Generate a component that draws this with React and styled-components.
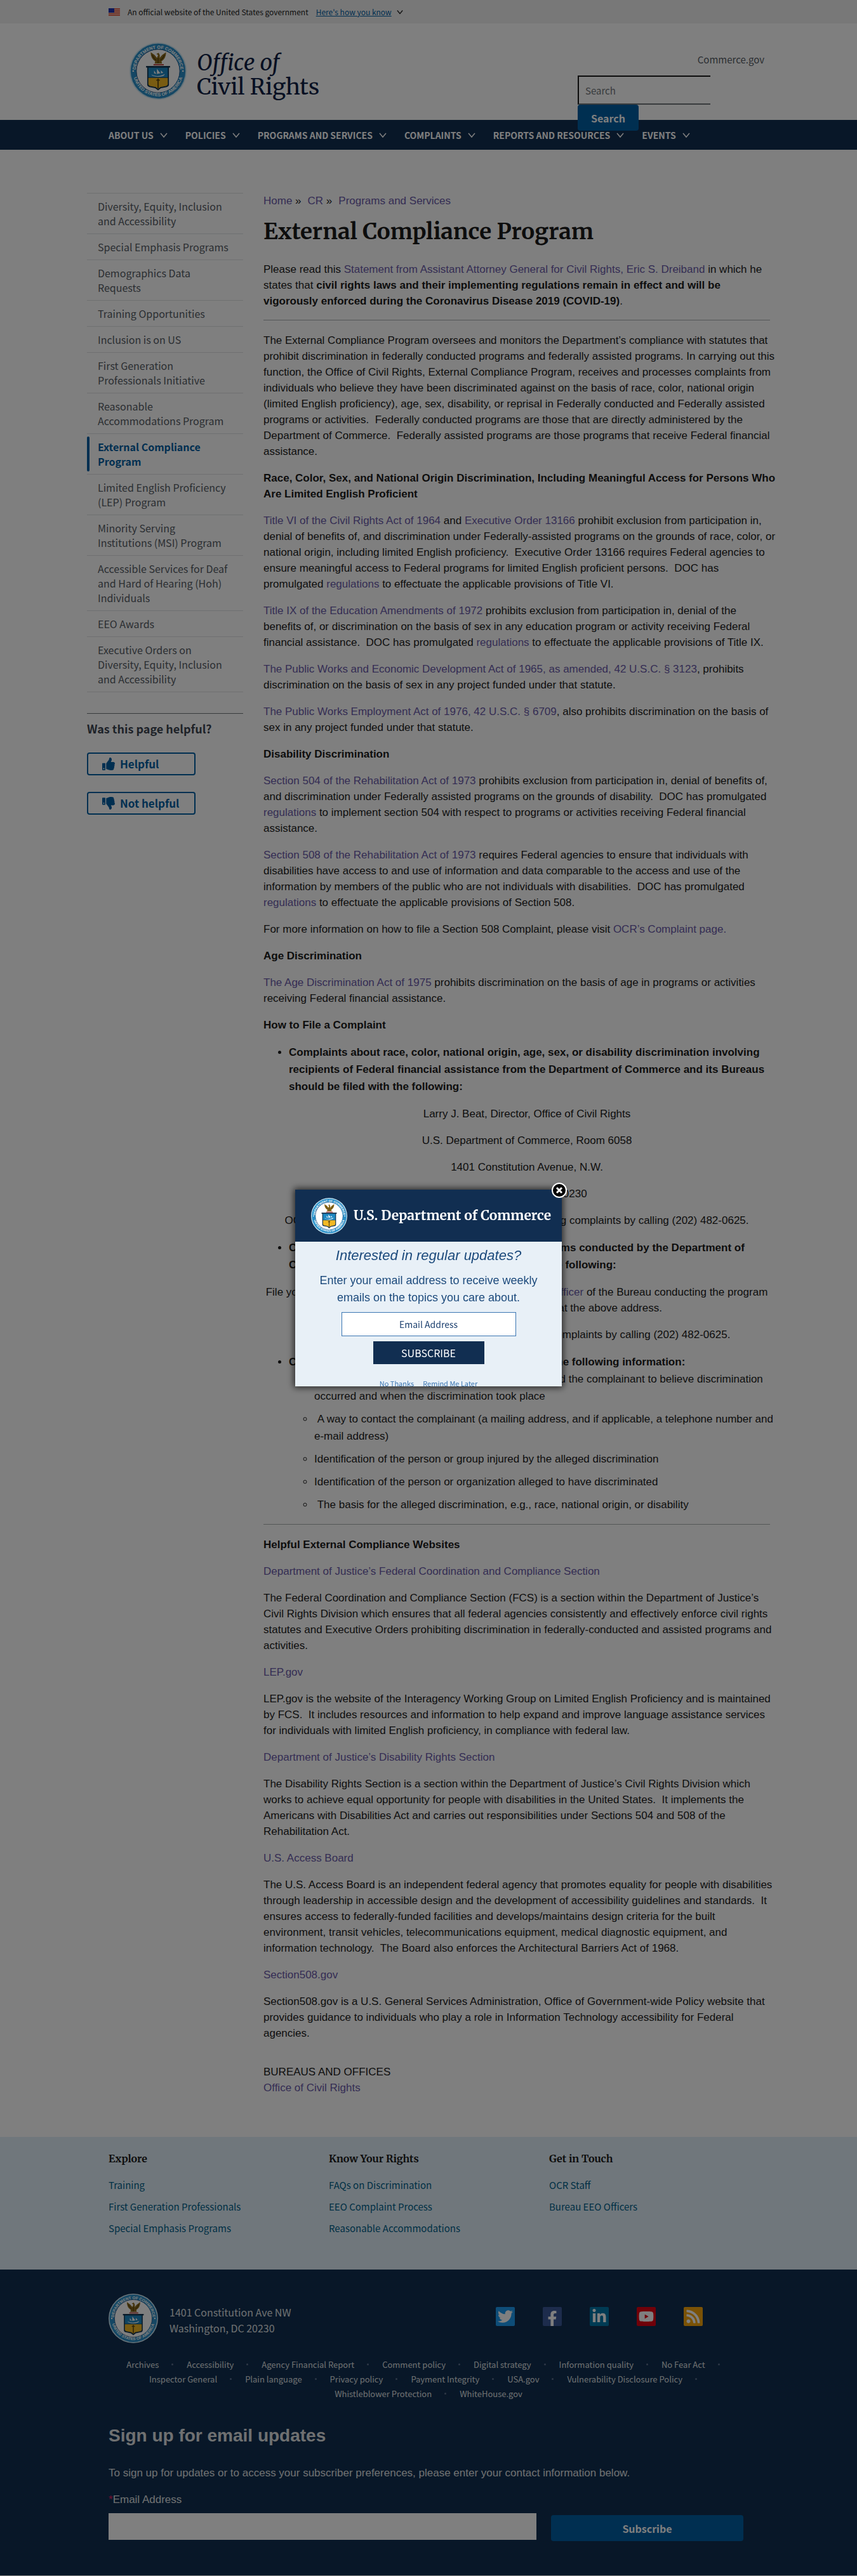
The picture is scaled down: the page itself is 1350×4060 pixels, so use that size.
import React, { useId } from 'react';
import styled, { createGlobalStyle, css } from 'styled-components';
import { FaThumbsUp, FaThumbsDown, FaTwitter, FaFacebookF, FaLinkedinIn, FaYoutube, FaRss } from 'react-icons/fa';

const sans = '"Liberation Sans", Arial, Helvetica, sans-serif';
const ui = '"Source Sans Pro", "Noto Sans CJK SC", sans-serif';
const serif = '"Merriweather", "DejaVu Serif Condensed", "DejaVu Serif", serif';

const navy = '#112e51';
const blue = '#005ea2';
const visited = '#6a5aa8';

const GlobalStyle = createGlobalStyle`
  *, *::before, *::after { box-sizing: border-box; }
  body { margin: 0; background: #fff; color: #1b1b1b; font: 17px/25px ${sans}; }
  a { color: ${visited}; text-decoration: none; }
  button, input { font: inherit; }
  ul { list-style: none; margin: 0; padding: 0; }
`;

const Wrap = styled.div`
  max-width: 1008px;
  margin: 0 auto;
`;

/* ---------- seal ---------- */

const SealSvg = styled.svg`
  display: block;
  flex: none;
  width: ${(p) => p.$size}px;
  height: ${(p) => p.$size}px;
`;

function Seal({ size }) {
  const id = useId();
  return (
    <SealSvg $size={size} viewBox="0 0 100 100" role="img" aria-label="Department of Commerce seal">
      <defs>
        <path id={`${id}t`} d="M 11 50 A 39 39 0 0 1 89 50" />
        <path id={`${id}b`} d="M 6 50 A 44 44 0 0 0 94 50" />
      </defs>
      <circle cx="50" cy="50" r="50" fill="#cfe9f5" />
      <circle cx="50" cy="50" r="48" fill="#2a8fc8" />
      <circle cx="50" cy="50" r="38" fill="#fff" stroke="#12467a" strokeWidth="1" />
      <g fill="#fff" fontFamily="Liberation Sans, sans-serif" fontSize="8" fontWeight="700" textAnchor="middle">
        <text><textPath href={`#${id}t`} startOffset="50%">DEPARTMENT OF COMMERCE</textPath></text>
        <text><textPath href={`#${id}b`} startOffset="50%">UNITED STATES OF AMERICA</textPath></text>
      </g>
      <circle cx="6.500" cy="50" r="1.500" fill="#fff" />
      <circle cx="93.500" cy="50" r="1.500" fill="#fff" />
      <path d="M37 17 L44 22 L48 27 L50 22 L47 20 L51 18 L53 22 L53 27 L57 22 L64 17 Q64 28 56 33 L57 37 L44 37 L45 33 Q37 28 37 17 Z" fill="#8a6a1c" />
      <path d="M40 22 Q43 29 47 31 M61 22 Q58 29 54 31 M50 27 V36" stroke="#4a3608" strokeWidth="1.200" fill="none" />
      <path d="M42 39 H60" stroke="#b3352c" strokeWidth="2" />
      <path d="M29 41 H71 V44 H69 V74 Q69 77 65 78 L55 80 L50 84 L45 80 L35 78 Q31 77 31 74 V44 H29 Z" fill="#12324f" />
      <path d="M33 44 H67 V61 H33 Z" fill="#1f88c2" />
      <path d="M33 62 H67 V73 Q67 75 64 76 L54 78 L50 81 L46 78 L36 76 Q33 75 33 73 Z" fill="#f2b824" />
      <path d="M38 56 Q50 62 62 55 L60 58 Q50 62 40 58 Z M43 54 V49 L47 55 Z M48 55 V46 L54 54 Z M55 54 V49 L59 53 Z" fill="#fff" />
      <path d="M50 63 V80 M47 66 H53 M49 69 H51" stroke="#5b4510" strokeWidth="2" />
    </SealSvg>
  );
}

/* ---------- banner ---------- */

const Banner = styled.div`
  background: #f0f0f0;
  font: 12px/37px ${ui};
`;
const BannerRow = styled(Wrap)`
  display: flex;
  align-items: center;
  height: 37px;
  gap: 12px;
  svg { flex: none; }
`;
const BannerLink = styled.button`
  display: inline-flex;
  align-items: center;
  gap: 8px;
  padding: 0;
  border: 0;
  background: none;
  color: ${blue};
  span { text-decoration: underline; }
`;

const Chevron = ({ size = 12, color = '#fff', weight = 1.5 }) => (
  <svg width={size} height={size} viewBox="0 0 12 12" aria-hidden="true">
    <path d="M1 3 L6 9 L11 3" fill="none" stroke={color} strokeWidth={weight} />
  </svg>
);

const Flag = () => (
  <svg width="18" height="12" viewBox="0 0 18 12" aria-hidden="true">
    <path d="M0 0H18V12H0Z" fill="#fff" />
    <path d="M0 1H18M0 3.500H18M0 6H18M0 8.500H18M0 11H18" stroke="#db3e1f" strokeWidth="1.300" />
    <path d="M0 0H9V7H0Z" fill="#1e33b1" />
  </svg>
);

/* ---------- header ---------- */

const HeaderRow = styled(Wrap)`
  display: flex;
  justify-content: space-between;
  padding: 30px 0 33px;
  height: 152px;
`;
const Brand = styled.a`
  display: flex;
  gap: 16px;
  padding-left: 33px;
  color: #0f1f45;
  font: 35px/38px ${serif};
`;
const BrandText = styled.span`
  display: flex;
  flex-direction: column;
  padding-top: 13px;
`;
const HeaderSide = styled.div`
  display: flex;
  flex-direction: column;
  width: 294px;
  margin-right: -25px;
  padding-top: 15px;
`;
const SiteLink = styled.a`
  align-self: flex-end;
  color: #565c65;
  font: 15px/24px ${ui};
`;
const SearchForm = styled.form`
  display: flex;
  flex-direction: column;
  align-items: flex-start;
  margin-top: 13px;
  z-index: 1;
`;
const SearchInput = styled.input`
  width: 209px;
  height: 46px;
  padding: 0 10px;
  border: 2px solid #1b1b1b;
  border-bottom-color: #71767a;
  border-right: 0;
  background: #fff;
  font: 15px/22px ${ui};
  &::placeholder { color: #71767a; opacity: 1; }
`;
const PrimaryButton = styled.button`
  border: 0;
  border-radius: 4px;
  background: ${blue};
  color: #fff;
  font: bold 16px/18px ${ui};
  height: 41px;
`;
const SearchButton = styled(PrimaryButton)`
  width: 96px;
  flex: none;
`;
const HiddenLabel = styled.label`
  position: absolute;
  width: 1px;
  height: 1px;
  overflow: hidden;
  clip-path: inset(50%);
`;

const Nav = styled.nav`
  background: ${navy};
`;
const NavList = styled.ul`
  display: flex;
  gap: 28px;
  max-width: 1008px;
  margin: 0 auto;
`;
const NavButton = styled.button`
  display: flex;
  align-items: center;
  gap: 10px;
  height: 47px;
  padding: 0;
  border: 0;
  background: none;
  color: #fff;
  font: bold 14px/20px ${ui};
  text-transform: uppercase;
`;

/* ---------- main ---------- */

const Layout = styled.div`
  display: grid;
  grid-template-columns: 246px minmax(0, 1fr);
  gap: 32px;
  max-width: 1100px;
  margin: 0 auto;
  padding: 68px 0 65px 12px;
`;
const SideList = styled.ul`
  border-top: 1px solid #dfe1e2;
  font: 16px/23px ${ui};
`;
const SideItem = styled.li`
  position: relative;
  padding: 9px 16px 8px 17px;
  border-bottom: 1px solid #dfe1e2;
  a { color: #565c65; }
  ${(p) => p.$active && css`
    a { color: ${blue}; font-weight: bold; }
    &::before {
      content: '';
      position: absolute;
      top: 4px;
      bottom: 4px;
      left: 0;
      width: 4px;
      border-radius: 4px;
      background: ${blue};
    }
  `}
`;
const Feedback = styled.section`
  display: flex;
  flex-direction: column;
  align-items: flex-start;
  gap: 26px;
  margin-top: 33px;
  padding-top: 11px;
  border-top: 1px solid #71767a;
  h2 { margin: 0; font: bold 18px/24px ${ui}; color: #3d4551; }
`;
const OutlineButton = styled.button`
  display: flex;
  align-items: center;
  gap: 8px;
  width: 171px;
  height: 36px;
  padding: 0 22px;
  border: 2px solid ${blue};
  border-radius: 4px;
  background: #fff;
  color: ${blue};
  font: bold 17px/20px ${ui};
  svg { width: 20px; height: 20px; }
`;

const Crumbs = styled.ol`
  display: flex;
  gap: 10px;
  margin: 0;
  padding: 0;
  list-style: none;
  li:not(:last-child)::after { content: ' »'; }
`;
const Title = styled.h1`
  margin: 12px 0 22px;
  font: bold 35px/49px ${serif};
`;
const P = styled.p`
  margin: 0 0 17px;
`;
const Heading = styled.h2`
  margin: 0 0 17px;
  font: bold 17px/25px ${sans};
`;
const Rule = styled.hr`
  height: 1px;
  margin: 0 12px 19px 0;
  border: 0;
  background: #a9aeb1;
`;
const Centered = styled(P)`
  margin-right: 12px;
  padding-left: ${(p) => (p.$indent ? 32 : 0)}px;
  text-align: center;
`;
const Bullets = styled.ul`
  margin-bottom: 17px;
  padding-left: 40px;
  list-style: disc;
  font-weight: bold;
  line-height: 27px;
`;
const SubBullets = styled.ul`
  display: flex;
  flex-direction: column;
  gap: 9px;
  padding-left: 40px;
  list-style: circle;
  font-weight: normal;
`;
const FieldBlock = styled.div`
  margin-top: 36px;
`;

/* ---------- footer ---------- */

const LinkBand = styled.div`
  background: #e1eff8;
`;
const LinkGrid = styled(Wrap)`
  display: grid;
  grid-template-columns: repeat(3, 347px);
  height: 209px;
  padding-top: 22px;
  h3 { margin: 0 0 18px; font: bold 16px/24px ${serif}; }
  ul { display: flex; flex-direction: column; gap: 10px; font: 15px/24px ${ui}; }
  a { color: #005f8a; }
`;
const Dark = styled.footer`
  background: ${navy};
  color: #dfe1e2;
`;
const DarkInner = styled(Wrap)`
  padding: 38px 0 54px;
`;
const ContactRow = styled.div`
  display: flex;
  align-items: center;
  justify-content: space-between;
  padding-right: 72px;
`;
const Address = styled.address`
  display: flex;
  align-items: center;
  gap: 18px;
  font: normal 16px/25px ${ui};
  span { padding-top: 6px; }
`;
const Social = styled.ul`
  display: flex;
  gap: 44px;
  margin-bottom: 6px;
`;
const SocialLink = styled.a`
  display: flex;
  align-items: ${(p) => (p.$low ? 'flex-end' : 'center')};
  justify-content: center;
  width: 30px;
  height: 30px;
  border-radius: 2px;
  background: ${(p) => p.$bg};
  color: #fff;
  svg { width: 24px; height: 24px; }
`;
const LegalLinks = styled.ul`
  display: flex;
  flex-wrap: wrap;
  justify-content: center;
  gap: 0 4px;
  margin-top: 22px;
  font: 13px/23px ${ui};
  a { color: #dfe1e2; }
  li { display: flex; align-items: center; }
  li:not(:last-child)::after {
    content: '';
    width: 3px;
    height: 3px;
    margin: 0 17px 0 20px;
    border-radius: 2px;
    background: #5b6f8c;
  }
`;
const SignUp = styled.form`
  margin-top: 38px;
  h2 { margin: 0 0 29px; font: bold 28px/34px ${sans}; }
`;
const SignLabel = styled.label`
  display: block;
  margin-bottom: 9px;
  span { color: #e31c5f; }
`;
const SignRow = styled.div`
  display: grid;
  grid-template-columns: 674px 303px;
  align-items: end;
  gap: 23px;
`;
const SignInput = styled.input`
  height: 42px;
  margin-bottom: 2px;
  border: 1px solid #fff;
  background: #fff;
`;

/* ---------- dialog ---------- */

const Overlay = styled.div`
  position: fixed;
  inset: 0;
  z-index: 10;
  display: flex;
  align-items: center;
  justify-content: center;
  background: rgba(0, 0, 0, 0.5);
`;
const DialogShell = styled.div`
  position: relative;
  width: 420px;
`;
const Dialog = styled.div`
  height: 310px;
  overflow: hidden;
  background: #e8f0f7;
  color: #1c4a7c;
  text-align: center;
  box-shadow: 0 0 10px 2px rgba(0, 0, 0, 0.7);
`;
const DialogHead = styled.div`
  display: flex;
  align-items: center;
  gap: 10px;
  height: 82px;
  padding-left: 25px;
  background: ${navy};
  color: #fff;
  font: bold 21px/28px ${serif};
  white-space: nowrap;
`;
const DialogForm = styled.form`
  display: flex;
  flex-direction: column;
  align-items: center;
  h2 { margin: 8px 0 12px; font: italic 22px/28px ${sans}; }
  p { margin: 0 0 9px; padding: 0 30px; font: 18px/27px ${sans}; }
`;
const DialogInput = styled.input`
  width: 275px;
  height: 38px;
  border: 1px solid #3b76b2;
  background: #fff;
  text-align: center;
  font: 14px/20px ${ui};
  &::placeholder { color: #1b3f6e; opacity: 1; }
`;
const DialogButton = styled.button`
  width: 175px;
  height: 36px;
  margin-top: 8px;
  border: 0;
  background: ${navy};
  color: #fff;
  font: 16px/20px ${ui};
`;
const DialogLinks = styled.div`
  display: flex;
  gap: 14px;
  margin-top: 22px;
  font: 11px/16px ${ui};
  a { color: #3b76b2; }
`;
const Close = styled.button`
  position: absolute;
  top: -11px;
  right: -8px;
  width: 24px;
  height: 24px;
  padding: 0;
  border: 0;
  background: none;
  svg { display: block; }
`;

const navItems = ['About Us', 'Policies', 'Programs and Services', 'Complaints', 'Reports and Resources', 'Events'];

const sideItems = [
  'Diversity, Equity, Inclusion and Accessibility',
  'Special Emphasis Programs',
  'Demographics Data Requests',
  'Training Opportunities',
  'Inclusion is on US',
  'First Generation Professionals Initiative',
  'Reasonable Accommodations Program',
  'External Compliance Program',
  'Limited English Proficiency (LEP) Program',
  'Minority Serving Institutions\u00a0(MSI) Program',
  'Accessible Services for Deaf and Hard of Hearing (Hoh) Individuals',
  'EEO Awards',
  'Executive Orders on Diversity, Equity, Inclusion and Accessibility',
];

const linkColumns = [
  ['Explore', ['Training', 'First Generation Professionals', 'Special Emphasis Programs']],
  ['Know Your Rights', ['FAQs on Discrimination', 'EEO Complaint Process', 'Reasonable Accommodations']],
  ['Get in Touch', ['OCR Staff', 'Bureau EEO Officers']],
];

const social = [
  ['Twitter', '#1d9bf0', FaTwitter],
  ['Facebook', '#3b5998', FaFacebookF, true],
  ['LinkedIn', '#0077a8', FaLinkedinIn],
  ['YouTube', '#e00012', FaYoutube],
  ['RSS', '#f5a40c', FaRss],
];

const legal = [
  'Archives', 'Accessibility', 'Agency Financial Report', 'Comment policy', 'Digital strategy',
  'Information quality', 'No Fear Act', 'Inspector General', 'Plain language', 'Privacy policy',
  'Payment Integrity', 'USA.gov', 'Vulnerability Disclosure Policy', 'Whistleblower Protection', 'WhiteHouse.gov',
];

const A = ({ children }) => <a href="#">{children}</a>;

export default function App() {
  return (
    <>
      <GlobalStyle />
      <Banner>
        <BannerRow>
          <Flag />
          <span>An official website of the United States government</span>
          <BannerLink type="button">
            <span>Here's how you know</span>
            <Chevron size={10} color="#1b1b1b" weight={1.5} />
          </BannerLink>
        </BannerRow>
      </Banner>
      <header>
        <HeaderRow>
          <Brand href="#">
            <Seal size={90} />
            <BrandText>
              <em>Office of</em>
              <span>Civil Rights</span>
            </BrandText>
          </Brand>
          <HeaderSide>
            <SiteLink href="#">Commerce.gov</SiteLink>
            <SearchForm>
              <HiddenLabel htmlFor="search">Search</HiddenLabel>
              <SearchInput id="search" placeholder="Search" />
              <SearchButton type="button">Search</SearchButton>
            </SearchForm>
          </HeaderSide>
        </HeaderRow>
        <Nav>
          <NavList>
            {navItems.map((n) => (
              <li key={n}>
                <NavButton type="button">{n}<Chevron /></NavButton>
              </li>
            ))}
          </NavList>
        </Nav>
      </header>

      <Layout>
        <aside>
          <SideList>
            {sideItems.map((s) => (
              <SideItem key={s} $active={s === 'External Compliance Program'}><A>{s}</A></SideItem>
            ))}
          </SideList>
          <Feedback>
            <h2>Was this page helpful?</h2>
            <OutlineButton type="button"><FaThumbsUp />Helpful</OutlineButton>
            <OutlineButton type="button"><FaThumbsDown />Not helpful</OutlineButton>
          </Feedback>
        </aside>

        <main>
          <Crumbs>
            <li><A>Home</A></li>
            <li><A>CR</A></li>
            <li><A>Programs and Services</A></li>
          </Crumbs>
          <Title>External Compliance Program</Title>
          <P>
            Please read this <A>Statement from Assistant Attorney General for Civil Rights, Eric S. Dreiband</A> in
            which he states that <strong>civil rights laws and their implementing regulations remain in effect and
            will be vigorously enforced during the Coronavirus Disease 2019 (COVID-19)</strong>.
          </P>
          <Rule />
          <P>
            The External Compliance Program oversees and monitors the Department’s compliance with statutes that
            prohibit discrimination in federally conducted programs and federally assisted programs. In carrying out
            this function, the Office of Civil Rights, External Compliance Program, receives and processes complaints
            from individuals who believe they have been discriminated against on the basis of race, color, national
            origin (limited English proficiency), age, sex, disability, or reprisal in Federally conducted and
            Federally assisted programs or activities.&nbsp; Federally conducted programs are those that are directly
            administered by the Department of Commerce.&nbsp; Federally assisted programs are those programs that
            receive Federal financial assistance.
          </P>
          <Heading>
            Race, Color, Sex, and National Origin Discrimination, Including Meaningful Access for Persons Who Are
            Limited English Proficient
          </Heading>
          <P>
            <A>Title VI of the Civil Rights Act of 1964</A> and <A>Executive Order 13166</A> prohibit exclusion from
            participation in, denial of benefits of, and discrimination under Federally-assisted programs on the
            grounds of race, color, or national origin, including limited English proficiency.&nbsp; Executive Order
            13166 requires Federal agencies to ensure meaningful access to Federal programs for limited English
            proficient persons.&nbsp; DOC has promulgated <A>regulations</A> to effectuate the applicable provisions
            of Title VI.
          </P>
          <P>
            <A>Title IX of the Education Amendments of 1972</A> prohibits exclusion from participation in, denial of
            the benefits&nbsp;of, or discrimination on the basis of sex in any education program or activity receiving
            Federal financial assistance.&nbsp; DOC has promulgated <A>regulations</A> to effectuate the applicable
            provisions of Title IX.
          </P>
          <P>
            <A>The Public Works and Economic Development Act of 1965, as amended, 42 U.S.C. § 3123</A>, prohibits
            discrimination on the basis of sex in any project funded under that statute.
          </P>
          <P>
            <A>The Public Works Employment Act of 1976, 42 U.S.C. § 6709</A>, also prohibits discrimination on the
            basis of sex in any project funded under that statute.
          </P>
          <Heading>Disability Discrimination</Heading>
          <P>
            <A>Section 504 of the Rehabilitation Act of 1973</A> prohibits exclusion from participation in, denial of
            benefits of, and discrimination under Federally assisted programs on the grounds of disability.&nbsp; DOC
            has promulgated <A>regulations</A> to implement section 504 with respect to programs or activities
            receiving Federal financial assistance.
          </P>
          <P>
            <A>Section 508 of the Rehabilitation Act of 1973</A> requires Federal agencies to ensure that individuals
            with disabilities have access to and use of information and data comparable to the access and use of the
            information by members of the public who are not individuals with disabilities.&nbsp; DOC has
            promulgated <A>regulations</A> to effectuate the applicable provisions of Section 508.
          </P>
          <P>
            For more information on how to file a Section 508 Complaint, please visit <A>OCR’s Complaint page.</A>
          </P>
          <Heading>Age Discrimination</Heading>
          <P>
            <A>The Age Discrimination Act of 1975</A> prohibits discrimination on the basis of age in programs or
            activities receiving Federal financial assistance.
          </P>
          <Heading>How to File a Complaint</Heading>
          <Bullets>
            <li>
              Complaints about race, color, national origin, age, sex, or disability discrimination involving
              recipients of Federal financial assistance from the Department of Commerce and its Bureaus should be
              filed with the following:
            </li>
          </Bullets>
          <Centered $indent>Larry J. Beat, Director, Office of Civil Rights</Centered>
          <Centered $indent>U.S. Department of Commerce, Room 6058</Centered>
          <Centered $indent>1401 Constitution Avenue, N.W.</Centered>
          <Centered $indent>Washington, D.C.&nbsp; 20230</Centered>
          <Centered>
            OCR staff can also assist you with all questions about filing complaints by calling (202) 482-0625.
          </Centered>
          <Bullets>
            <li>
              Complaints about discrimination in any of the programs conducted by the Department of Commerce and their
              Bureaus should be filed with the following:
            </li>
          </Bullets>
          <Centered>
            File your complaint with the Equal Employment Opportunity <A>Officer</A> of the Bureau conducting the
            program or with the Office of Civil Rights (OCR) at the above address.
          </Centered>
          <Centered>OCR can also assist you with questions about filing complaints by calling (202) 482-0625.</Centered>
          <Bullets>
            <li>
              Complaints must be in writing, and contain at least the following information:
              <SubBullets>
                <li>
                  A written description of the event or events which led the complainant to believe discrimination
                  occurred and when the discrimination took place
                </li>
                <li>
                  &nbsp;A way to contact the complainant (a mailing address, and if applicable, a telephone number and
                  e-mail address)
                </li>
                <li>Identification of the person or group injured by the alleged discrimination</li>
                <li>Identification of the person or organization alleged to have discriminated</li>
                <li>&nbsp;The basis for the alleged discrimination, e.g., race, national origin, or disability</li>
              </SubBullets>
            </li>
          </Bullets>
          <Rule />
          <Heading>Helpful External Compliance Websites</Heading>
          <P><A>Department of Justice’s Federal Coordination and Compliance Section</A></P>
          <P>
            The Federal Coordination and Compliance Section (FCS) is a section within the Department of Justice’s
            Civil Rights Division which ensures that all federal agencies consistently and effectively enforce civil
            rights statutes and Executive Orders prohibiting discrimination in federally-conducted and assisted
            programs and activities.
          </P>
          <P><A>LEP.gov</A></P>
          <P>
            LEP.gov is the website of the Interagency Working Group on Limited English Proficiency and is maintained
            by FCS.&nbsp; It includes resources and information to help expand and improve language assistance
            services for individuals with limited English proficiency, in compliance with federal law.
          </P>
          <P><A>Department of Justice’s Disability Rights Section</A></P>
          <P>
            The Disability Rights Section is a section within the Department of Justice’s Civil Rights Division which
            works to achieve equal opportunity for people with disabilities in the United States.&nbsp; It implements
            the Americans with Disabilities Act and carries out responsibilities under Sections 504 and 508 of the
            Rehabilitation Act.
          </P>
          <P><A>U.S. Access Board</A></P>
          <P>
            The U.S. Access Board is an independent federal agency that promotes equality for people with
            disabilities through leadership in accessible design and the development of accessibility guidelines and
            standards.&nbsp; It ensures access to federally-funded facilities and develops/maintains design criteria
            for the built environment, transit vehicles, telecommunications equipment, medical diagnostic equipment,
            and information technology.&nbsp; The Board also enforces the Architectural Barriers Act of 1968.
          </P>
          <P><A>Section508.gov</A></P>
          <P>
            Section508.gov is a U.S. General Services Administration, Office of Government-wide Policy website that
            provides guidance to individuals who play a role in Information Technology accessibility for Federal
            agencies.
          </P>
          <FieldBlock>
            <div>BUREAUS AND OFFICES</div>
            <A>Office of Civil Rights</A>
          </FieldBlock>
        </main>
      </Layout>

      <LinkBand>
        <LinkGrid>
          {linkColumns.map(([title, links]) => (
            <section key={title}>
              <h3>{title}</h3>
              <ul>{links.map((l) => <li key={l}><A>{l}</A></li>)}</ul>
            </section>
          ))}
        </LinkGrid>
      </LinkBand>

      <Dark>
        <DarkInner>
          <ContactRow>
            <Address>
              <Seal size={78} />
              <span>1401 Constitution Ave NW<br />Washington, DC 20230</span>
            </Address>
            <Social>
              {social.map(([name, bg, Icon, low]) => (
                <li key={name}>
                  <SocialLink href="#" aria-label={name} $bg={bg} $low={low}><Icon /></SocialLink>
                </li>
              ))}
            </Social>
          </ContactRow>
          <LegalLinks>
            {legal.map((l) => <li key={l}><A>{l}</A></li>)}
          </LegalLinks>
          <SignUp>
            <h2>Sign up for email updates</h2>
            <P>To sign up for updates or to access your subscriber preferences, please enter your contact information below.</P>
            <SignLabel htmlFor="signup-email"><span>*</span>Email Address</SignLabel>
            <SignRow>
              <SignInput id="signup-email" type="email" />
              <PrimaryButton type="button">Subscribe</PrimaryButton>
            </SignRow>
          </SignUp>
        </DarkInner>
      </Dark>

      <Overlay>
        <DialogShell role="dialog" aria-modal="true" aria-labelledby="dialog-title">
          <Dialog>
            <DialogHead><Seal size={57} />U.S. Department of Commerce</DialogHead>
            <DialogForm>
              <h2 id="dialog-title">Interested in regular updates?</h2>
              <p>Enter your email address to receive weekly emails on the topics you care about.</p>
              <HiddenLabel htmlFor="dialog-email">Email Address</HiddenLabel>
              <DialogInput id="dialog-email" type="email" placeholder="Email Address" />
              <DialogButton type="button">SUBSCRIBE</DialogButton>
              <DialogLinks><A>No Thanks</A><A>Remind Me Later</A></DialogLinks>
            </DialogForm>
          </Dialog>
          <Close type="button" aria-label="Close">
            <svg width="24" height="24" viewBox="0 0 24 24">
              <circle cx="12" cy="12" r="11" fill="#000" stroke="#fff" strokeWidth="2" />
              <path d="M8 8 L16 16 M16 8 L8 16" stroke="#fff" strokeWidth="3" />
            </svg>
          </Close>
        </DialogShell>
      </Overlay>
    </>
  );
}
